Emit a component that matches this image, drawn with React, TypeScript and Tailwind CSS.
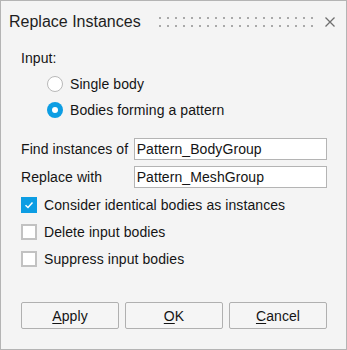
import React from "react";

function Radio({ checked }: { checked: boolean }) {
  return checked ? (
    <span className="flex h-[16px] w-[16px] shrink-0 items-center justify-center rounded-full bg-[#0c9de3]">
      <span className="h-[6px] w-[6px] rounded-full bg-white" />
    </span>
  ) : (
    <span className="h-[16px] w-[16px] shrink-0 rounded-full border-[1.5px] border-[#b9b9b9] bg-white" />
  );
}

function Check({ checked }: { checked: boolean }) {
  return checked ? (
    <span className="flex h-[16px] w-[16px] shrink-0 items-center justify-center bg-[#0c9de3]">
      <svg width="10" height="8" viewBox="0 0 10 8">
        <path d="M1.5 4.2 L4 6.5 L8.5 1.5" fill="none" stroke="white" strokeWidth="1.5" />
      </svg>
    </span>
  ) : (
    <span className="h-[16px] w-[16px] shrink-0 border-2 border-[#c2c2c2] bg-white" />
  );
}

export default function App() {
  const rows = [0, 1];
  const cols = Array.from({ length: 20 }, (_, i) => i);
  return (
    <div className="flex h-[350px] w-[347px] flex-col border border-[#b4b4b4] bg-[#f4f4f4] font-['Liberation_Sans',Arial,sans-serif] text-[14px] leading-[16px] tracking-[0.08px] text-[#141414]">
      {/* title bar */}
      <div className="flex h-[41px] shrink-0 items-center pl-[8px]">
        <div className="w-[150px] text-[16px] leading-[18px] tracking-normal text-[#1e1e1e]">Replace Instances</div>
        <svg width="154" height="10" viewBox="0 0 154 10" className="mt-[1px]">
          {rows.map((r) =>
            cols.map((c) => (
              <rect key={`${r}-${c}`} x={c * 8} y={r * 8} width="2" height="2" fill="#a9a9a9" />
            ))
          )}
        </svg>
        <svg width="10" height="10" viewBox="0 0 10 10" className="ml-[12px] mt-[1px]">
          <path d="M0.5 0.5 L9.5 9.5 M9.5 0.5 L0.5 9.5" stroke="#6f6f6f" strokeWidth="1.3" />
        </svg>
      </div>

      <div className="flex flex-col pl-[20px] pr-[19px]">
        <div className="mt-[8px] h-[16px]">Input:</div>
        <div className="mt-[10px] flex h-[16px] items-center gap-[7px] pl-[26px]">
          <Radio checked={false} />
          <span>Single body</span>
        </div>
        <div className="mt-[10px] flex h-[16px] items-center gap-[7px] pl-[26px]">
          <Radio checked={true} />
          <span>Bodies forming a pattern</span>
        </div>

        <div className="mt-[20px] flex h-[22px] items-center">
          <span className="w-[113px]">Find instances of</span>
          <input
            readOnly
            value="Pattern_BodyGroup"
            className="h-[22px] w-[194px] border border-[#b4b4b4] bg-white px-[2px] text-[14px] tracking-[0.08px] text-[#141414] outline-none"
          />
        </div>
        <div className="mt-[6px] flex h-[22px] items-center">
          <span className="w-[113px]">Replace with</span>
          <input
            readOnly
            value="Pattern_MeshGroup"
            className="h-[22px] w-[194px] border border-[#b4b4b4] bg-white px-[2px] text-[14px] tracking-[0.08px] text-[#141414] outline-none"
          />
        </div>

        <div className="mt-[9px] flex h-[16px] items-center gap-[7px]">
          <Check checked={true} />
          <span>Consider identical bodies as instances</span>
        </div>
        <div className="mt-[11px] flex h-[16px] items-center gap-[7px]">
          <Check checked={false} />
          <span>Delete input bodies</span>
        </div>
        <div className="mt-[11px] flex h-[16px] items-center gap-[7px]">
          <Check checked={false} />
          <span>Suppress input bodies</span>
        </div>

        <div className="mt-[35px] flex gap-[6px]">
          <button className="h-[27px] w-[98px] rounded-[2px] border border-[#b0b0b0] bg-[#f5f5f5] text-[14px] text-[#141414]">
            <u className="underline-offset-2">A</u>pply
          </button>
          <button className="h-[27px] w-[98px] rounded-[2px] border border-[#b0b0b0] bg-[#f5f5f5] text-[14px] text-[#141414]">
            <u className="underline-offset-2">O</u>K
          </button>
          <button className="h-[27px] w-[98px] rounded-[2px] border border-[#b0b0b0] bg-[#f5f5f5] text-[14px] text-[#141414]">
            <u className="underline-offset-2">C</u>ancel
          </button>
        </div>
      </div>
    </div>
  );
}
